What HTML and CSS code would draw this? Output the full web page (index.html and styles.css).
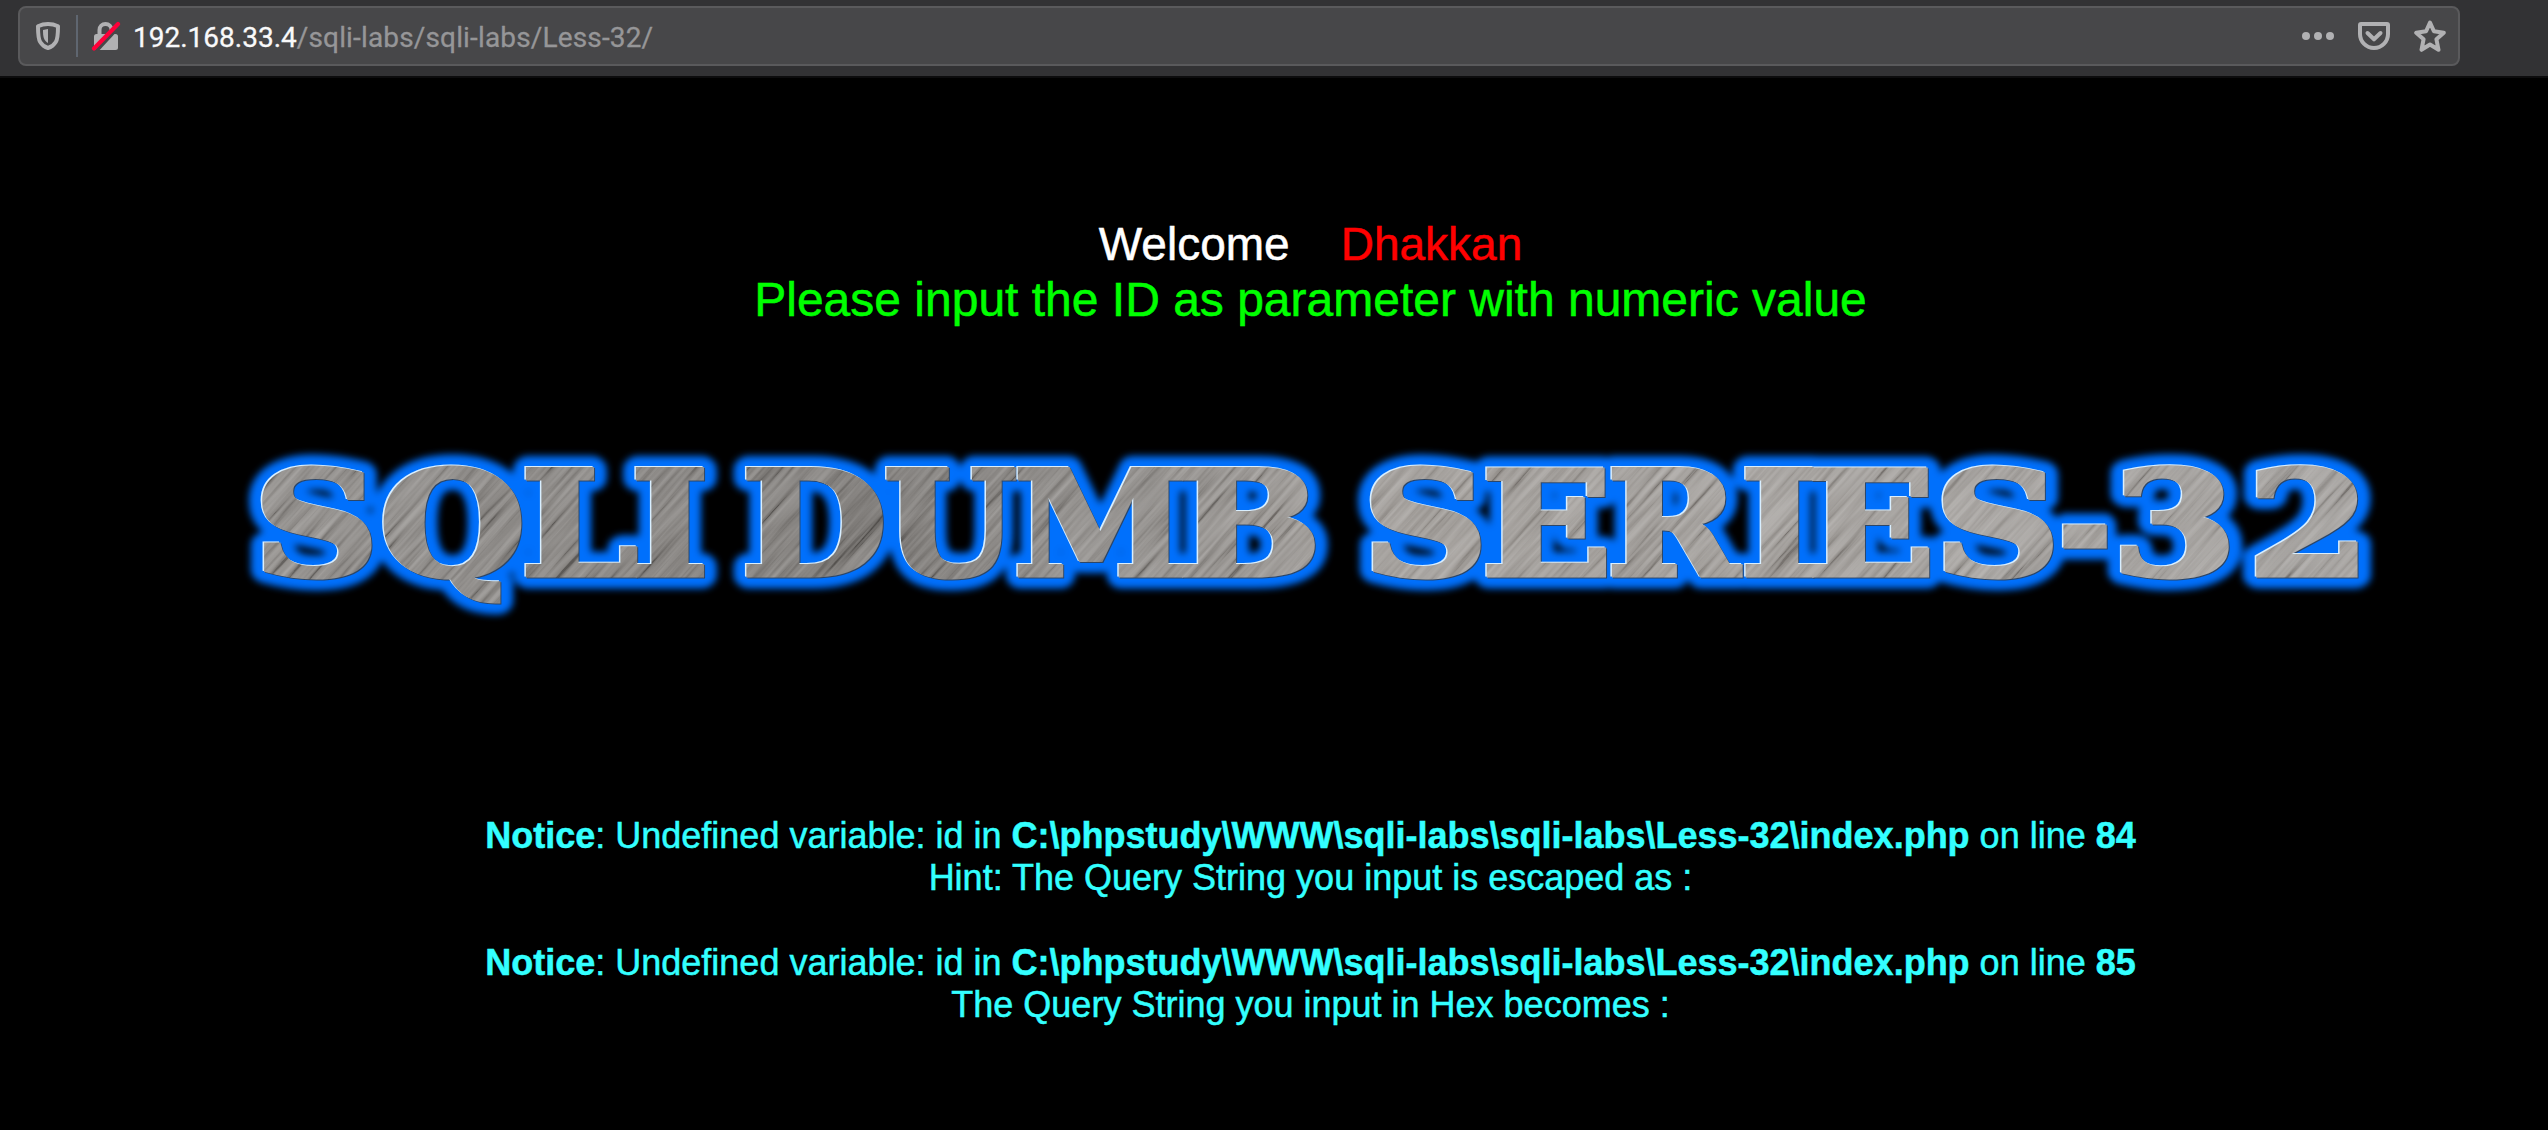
FILE: index.html
```
<!DOCTYPE html>
<html lang="en">
<head>
<meta charset="utf-8">
<title>Less-32</title>
<link rel="stylesheet" href="styles.css">
</head>
<body>
<header class="toolbar">
  <div class="urlbar">
    <svg class="icon shield" width="24" height="28" viewBox="0 0 24 28">
      <path d="M12 2C8.600 2 5.200 2.700 2 4.200C2 12 2 16.500 4.200 20C6.200 23.200 9 25.200 12 26C15 25.200 17.800 23.200 19.800 20C22 16.500 22 12 22 4.200C18.800 2.700 15.400 2 12 2Z" fill="none" stroke="#b1b1b3" stroke-width="4" stroke-linejoin="round"/>
      <path d="M12 7L7 8C7 14.500 7.500 18.500 12 21Z" fill="#b1b1b3"/>
    </svg>
    <span class="divider"></span>
    <svg class="icon lock" width="30" height="30" viewBox="0 0 30 30">
      <path d="M9 14V9a6 6 0 0 1 12 0V14" transform="translate(-.5 0)" fill="none" stroke="#b1b1b3" stroke-width="4"/>
      <rect x="3" y="13" width="24" height="16" rx="2.500" fill="#b1b1b3"/>
      <path d="M5.500 29.500L30 3" stroke="#474749" stroke-width="4"/>
      <path d="M3 27.500L27 3" stroke="#ff0039" stroke-width="4.200" stroke-linecap="round"/>
    </svg>
    <span class="url"><span class="host">192.168.33.4</span><span class="path">/sqli-labs/sqli-labs/Less-32/</span></span>
    <div class="actions">
      <svg width="32" height="8" viewBox="0 0 32 8" fill="#b1b1b3"><circle cx="4" cy="4" r="4"/><circle cx="16" cy="4" r="4"/><circle cx="28" cy="4" r="4"/></svg>
      <svg width="32" height="28" viewBox="0 0 32 28" fill="none" stroke="#b1b1b3" stroke-width="4" stroke-linejoin="round" stroke-linecap="round"><path d="M3 2H29Q30 2 30 3V12A14 14 0 0 1 2 12V3Q2 2 3 2Z"/><path d="M9.500 11L16 17.300L22.500 11"/></svg>
      <svg width="32" height="32" viewBox="0 0 32 32" fill="none" stroke="#b1b1b3" stroke-width="4" stroke-linejoin="round"><path d="M16 2.500L19.900 11.300L29.800 12.700L22.400 19.200L24.500 29.800L16 24.500L7.500 29.800L9.600 19.200L2.200 12.700L12.100 11.300Z"/></svg>
    </div>
  </div>
</header>
<main class="page">
  <div class="welcome">Welcome<span class="name">Dhakkan</span></div>
  <div class="prompt">Please input the ID as parameter with numeric value</div>
  <svg class="logo" width="2170" height="200" viewBox="230 430 2170 200">
    <defs>
      <g id="word" class="word">
        <text transform="translate(253.700 575) scale(1.203 1)">S</text>
        <text transform="translate(379.500 575) scale(1.165 1)">Q</text>
        <text transform="translate(521 575) scale(1.155 1)">L</text>
        <text transform="translate(631 575) scale(1.155 1)">I</text>
        <text transform="translate(741.600 575) scale(1.165 1)">D</text>
        <text transform="translate(884 575) scale(1.055 1)">U</text>
        <text transform="translate(1014 575) scale(1.090 1)">M</text>
        <text transform="translate(1177.300 575) scale(1.183 1)">B</text>
        <text transform="translate(1362.700 575) scale(1.205 1)">S</text>
        <text transform="translate(1481.700 575) scale(1.185 1)">E</text>
        <text transform="translate(1607.300 575) scale(1.100 1)">R</text>
        <text transform="translate(1740.800 575) scale(1.155 1)">I</text>
        <text transform="translate(1807 575) scale(1.165 1)">E</text>
        <text transform="translate(1934.400 575) scale(1.210 1)">S</text>
        <text transform="translate(2058.700 575) scale(0.880 1)">-</text>
        <text transform="translate(2112 575) scale(1.249 1)">3</text>
        <text transform="translate(2247.500 575) scale(1.226 1)">2</text>
      </g>
      <linearGradient id="steel" gradientUnits="userSpaceOnUse" x1="250" y1="0" x2="2370" y2="0">
        <stop offset="0" stop-color="#8c8986"/><stop offset=".2" stop-color="#7f7c79"/><stop offset=".3" stop-color="#787572"/><stop offset=".42" stop-color="#8c8986"/><stop offset=".55" stop-color="#9b9793"/><stop offset="1" stop-color="#9d9a97"/>
      </linearGradient>
      <filter id="blur" filterUnits="userSpaceOnUse" x="230" y="430" width="2170" height="200"><feGaussianBlur stdDeviation="3.500"/></filter>
      <filter id="brushed" x="0" y="0" width="1" height="1">
        <feTurbulence type="fractalNoise" baseFrequency="0.008 0.200" numOctaves="3" seed="4"/>
        <feColorMatrix values="1.600 0 0 0 -.36  1.600 0 0 0 -.36  1.600 0 0 0 -.36  0 0 0 0 1"/>
      </filter>
      <mask id="letters" maskUnits="userSpaceOnUse" x="230" y="430" width="2170" height="200"><use href="#word" fill="#fff" stroke="#fff" stroke-width="5"/></mask>
    </defs>
    <use href="#word" fill="#0070fc" stroke="#0070fc" stroke-width="27" stroke-linejoin="round" filter="url(#blur)"/>
    <use href="#word" fill="#2c4668" stroke="#2c4668" stroke-width="5" x="1" y="1"/>
    <use href="#word" fill="#d9efff" stroke="#d9efff" stroke-width="5" x="-1.500" y="-1.500"/>
    <g mask="url(#letters)">
      <rect x="230" y="430" width="2170" height="200" fill="url(#steel)"/>
      <g class="streaks"><rect x="-500" y="-1000" width="2900" height="2900" transform="translate(700 100) rotate(-48 600 450)" filter="url(#brushed)"/></g>
    </g>
  </svg>
  <div class="output">
    <p><b>Notice</b>: Undefined variable: id in <b>C:\phpstudy\WWW\sqli-labs\sqli-labs\Less-32\index.php</b> on line <b>84</b><br>Hint: The Query String you input is escaped as :</p>
    <p><b>Notice</b>: Undefined variable: id in <b>C:\phpstudy\WWW\sqli-labs\sqli-labs\Less-32\index.php</b> on line <b>85</b><br>The Query String you input in Hex becomes :</p>
  </div>
</main>
</body>
</html>
```
FILE: styles.css
```
* { box-sizing: border-box; }
body {
  margin: 0;
  height: 1130px;
  overflow: hidden;
  background: #000;
  font-family: "Liberation Sans", Arial, sans-serif;
}
svg { display: block; flex: none; }

.toolbar {
  height: 78px;
  padding: 6px 0 0 18px;
  background: #323234;
  border-bottom: 2px solid #0c0c0d;
}
.urlbar {
  display: flex;
  align-items: center;
  width: 2442px;
  height: 60px;
  padding: 0 12px 0 16px;
  background: #474749;
  border: 2px solid #5a5a5c;
  border-radius: 8px;
}
.divider {
  width: 2px;
  height: 42px;
  margin: 0 13px 0 16px;
  background: #5f6670;
}
.url {
  margin-left: 12px;
  font: 28px/40px Roboto, sans-serif;
  padding-top: 3px;
  white-space: nowrap;
  -webkit-text-stroke: 0.3px;
}
.host { color: #f9f9fa; }
.path { color: #969698; letter-spacing: 0.15px; }
.actions {
  display: flex;
  align-items: center;
  gap: 24px;
  margin-left: auto;
}

.page { text-align: center; }
.welcome, .prompt, .output {
  padding-left: 73px;
  white-space: nowrap;
  -webkit-text-stroke: 0.5px;
}
.welcome {
  padding-top: 139px;
  line-height: 55px;
  font-size: 46px;
  color: #fff;
}
.name { margin-left: 51px; color: #f00; }
.prompt {
  line-height: 55px;
  font-size: 48px;
  color: #0f0;
}
.logo { margin: 103px 0 0 230px; }
.word { font: bold 144px "DejaVu Serif", serif; }
.streaks { mix-blend-mode: soft-light; opacity: 0.6; }

.output {
  padding-top: 185px;
  font-size: 36px;
  line-height: 42.25px;
  color: #3ff;
}
.output p { margin: 0 0 42.25px; }
```
